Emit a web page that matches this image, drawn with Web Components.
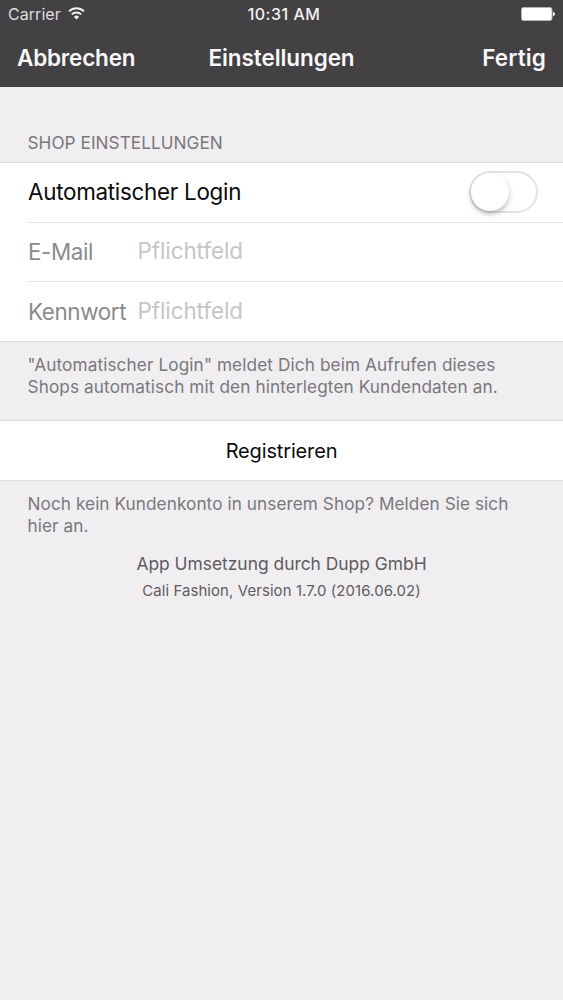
<!DOCTYPE html>
<html lang="de">
<head>
<meta charset="utf-8">
<title>Einstellungen</title>
<style>
html,body{margin:0;height:100%}
body{background:#f0eef1;font-family:Inter,"Liberation Sans",sans-serif;overflow:hidden}
</style>
</head>
<body>
<settings-screen></settings-screen>
<script>
function define(name, html) {
  const t = document.createElement('template');
  t.innerHTML = html;
  customElements.define(name, class extends HTMLElement {
    constructor() {
      super();
      this.attachShadow({ mode: 'open' }).appendChild(t.content.cloneNode(true));
    }
  });
}

define('status-bar', `
<style>
:host{display:grid;grid-template-columns:1fr auto 1fr;align-items:center;height:28px;padding:0 8px;color:#dddcde;font-size:16px;line-height:20px;box-sizing:border-box}
.left{display:flex;align-items:center;gap:7px}
.carrier{letter-spacing:.05px}
.time{font-weight:500;font-size:16px;letter-spacing:.5px;color:#f3f2f4;margin-left:5px}
.right{display:flex;justify-content:flex-end}
svg{display:block}
.left svg{margin-top:-1px}
</style>
<div class="left"><span class="carrier">Carrier</span>
<svg width="17" height="13" viewBox="0 0 17 13" fill="none" stroke="#f1f0f2" stroke-width="2"><path d="M1 4.4a10.6 10.6 0 0 1 15 0"/><path d="M3.8 7.4a6.6 6.6 0 0 1 9.4 0"/><path d="M8.5 12.6L5.9 9.9a3.7 3.7 0 0 1 5.2 0z" fill="#f1f0f2" stroke="none"/></svg></div>
<span class="time">10:31 AM</span>
<div class="right"><svg width="34" height="14" viewBox="0 0 34 14"><rect x=".5" y=".5" width="30.5" height="13" rx="2" fill="#fff" stroke="#b5b4b6"/><path d="M32 4.8q2 .8 2 2.2t-2 2.2z" fill="#fff"/></svg></div>
`);

define('nav-bar', `
<style>
:host{display:grid;grid-template-columns:1fr auto 1fr;align-items:center;height:59px;box-sizing:border-box;padding:1px 17px 0;color:#f8f7f9;font-size:22.5px;font-weight:600;line-height:28px}
::slotted([slot=left]){letter-spacing:-.2px}
::slotted([slot=title]){letter-spacing:-.08px}
::slotted([slot=right]){text-align:right;letter-spacing:.12px}
</style>
<slot name="left"></slot><slot name="title"></slot><slot name="right"></slot>
`);

define('toggle-switch', `
<style>
:host{display:block;width:69px;height:42px;box-sizing:border-box;border:2px solid #e4e2e6;border-radius:21px;background:#fff}
i{display:block;width:38px;height:38px;border-radius:50%;background:#fff;box-shadow:0 3px 4px rgba(0,0,0,.2),0 3px 9px rgba(0,0,0,.07)}
</style><i></i>
`);

define('list-row', `
<style>
:host{display:flex;align-items:center;height:58.5px;margin-left:28px;padding-right:25px;font-size:22.4px;line-height:28px;letter-spacing:-.27px;color:#0b0b0c;border-bottom:1px solid #e6e4e8;box-sizing:content-box}
:host([last]){border-bottom:0}
:host([centered]){margin-left:0;padding:0;justify-content:center;font-size:20px;letter-spacing:-.15px}
:host([field]){color:#8c8a8c;letter-spacing:-.38px}
::slotted(.label){width:109.5px;white-space:nowrap;margin-top:1px}
::slotted(.hint){color:#c6c4c8;letter-spacing:-.06px;margin-top:-1px}
::slotted(toggle-switch){margin-left:auto}
</style><slot></slot>
`);

define('list-group', `
<style>
:host{display:block}
.head,.foot{font-size:17.2px;line-height:21.7px;color:#7a787b;padding-left:27.5px;white-space:nowrap}
.head{padding-bottom:8px}
.foot{padding-top:12.5px;letter-spacing:var(--note-spacing,.11px)}
.rows{background:#fff;border-top:1px solid #dddbdf;border-bottom:1px solid #dddbdf}
</style>
<div class="head"><slot name="head"></slot></div>
<div class="rows"><slot></slot></div>
<div class="foot"><slot name="foot"></slot></div>
`);

define('settings-screen', `
<style>
:host{display:flex;flex-direction:column;height:1000px;background:#f0eef1}
header{background:#434143;height:87px}
list-group.a{padding-top:45.3px}
list-group.b{padding-top:15px;--note-spacing:.07px}
[slot=head]{letter-spacing:.05px}
footer{text-align:center;color:#5e5c60;padding-top:14.8px}
.app{font-size:17.4px;line-height:24px}
.ver{font-size:14.9px;line-height:20px;margin-top:5px;letter-spacing:.12px}
</style>
<header><status-bar></status-bar>
<nav-bar><span slot="left">Abbrechen</span><span slot="title">Einstellungen</span><span slot="right">Fertig</span></nav-bar></header>
<list-group class="a"><span slot="head">SHOP EINSTELLUNGEN</span>
<list-row><span>Automatischer Login</span><toggle-switch></toggle-switch></list-row>
<list-row field><span class="label">E-Mail</span><span class="hint">Pflichtfeld</span></list-row>
<list-row field last><span class="label">Kennwort</span><span class="hint">Pflichtfeld</span></list-row>
<span slot="foot">"Automatischer Login" meldet Dich beim Aufrufen dieses<br>Shops automatisch mit den hinterlegten Kundendaten an.</span></list-group>
<list-group class="b"><list-row centered last><span>Registrieren</span></list-row>
<span slot="foot">Noch kein Kundenkonto in unserem Shop? Melden Sie sich<br>hier an.</span></list-group>
<footer><div class="app">App Umsetzung durch Dupp GmbH</div><div class="ver">Cali Fashion, Version 1.7.0 (2016.06.02)</div></footer>
`);
</script>
</body>
</html>
